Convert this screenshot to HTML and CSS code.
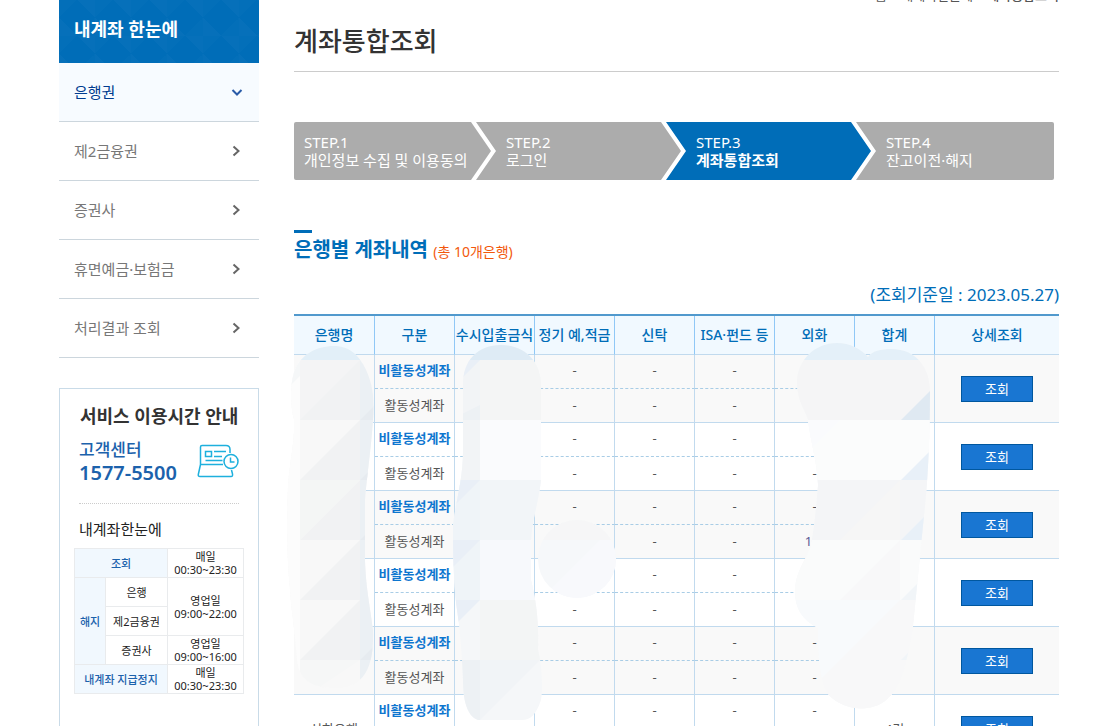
FILE: index.html
```html
<!DOCTYPE html>
<html lang="ko">
<head>
<meta charset="utf-8">
<title>계좌통합조회</title>
<link rel="stylesheet" href="styles.css">
</head>
<body>
<div class="page">
  <aside class="side">
    <h2 class="side-title">내계좌 한눈에</h2>
    <nav class="menu">
      <a class="on" href="#">은행권<svg class="chev" viewBox="0 0 12 12"><path d="M1.5 4 6 8.500 10.500 4"/></svg></a>
      <a href="#">제2금융권<svg class="chev" viewBox="0 0 12 12"><path d="M2.500 1.500 7.500 6 2.500 10.500"/></svg></a>
      <a href="#">증권사<svg class="chev" viewBox="0 0 12 12"><path d="M2.500 1.500 7.500 6 2.500 10.500"/></svg></a>
      <a href="#">휴면예금·보험금<svg class="chev" viewBox="0 0 12 12"><path d="M2.500 1.500 7.500 6 2.500 10.500"/></svg></a>
      <a href="#">처리결과 조회<svg class="chev" viewBox="0 0 12 12"><path d="M2.500 1.500 7.500 6 2.500 10.500"/></svg></a>
    </nav>
    <section class="card">
      <h3 class="card-title">서비스 이용시간 안내</h3>
      <div class="call">
        <div>
          <p class="call-name">고객센터</p>
          <p class="call-num">1577-5500</p>
        </div>
        <svg class="call-icon" viewBox="0 0 42 34">
          <path d="M26 20.500H3.500V3Q3.500 1.500 5 1.500H29Q33 1.500 33 5.500V9M3.500 20.500 1.300 30.500Q1 32.500 3 32.500H34Q36 32.500 35.500 30L34.500 26"/>
          <path d="M8.500 7.500h6v5h-6zM17 7.500h12M17 12.500h8M8.500 16.500h17"/>
          <circle cx="34" cy="17.500" r="7"/>
          <path d="M33.500 13.500v4.500h4"/>
        </svg>
      </div>
      <h4 class="card-sub">내계좌한눈에</h4>
      <table class="hours">
        <colgroup><col class="h1"><col class="h2"><col></colgroup>
        <tr><th colspan="2">조회</th><td>매일<br>00:30~23:30</td></tr>
        <tr><th rowspan="3">해지</th><td>은행</td><td rowspan="2">영업일<br>09:00~22:00</td></tr>
        <tr><td>제2금융권</td></tr>
        <tr><td>증권사</td><td>영업일<br>09:00~16:00</td></tr>
        <tr><th colspan="2">내계좌 지급정지</th><td>매일<br>00:30~23:30</td></tr>
      </table>
    </section>
  </aside>
  <main class="main">
    <div class="crumbs"><span>홈 &gt; 내계좌한눈에 &gt; <b>계좌통합조회</b></span></div>
    <h1 class="title">계좌통합조회</h1>
    <ol class="steps">
      <li class="first">STEP.1<br>개인정보 수집 및 이용동의</li>
      <li>STEP.2<br>로그인</li>
      <li class="now">STEP.3<br><b>계좌통합조회</b></li>
      <li class="last">STEP.4<br>잔고이전·해지</li>
    </ol>
    <h2 class="sub">은행별 계좌내역 <small>(총 10개은행)</small></h2>
    <p class="date">(조회기준일 : 2023.05.27)</p>
    <div class="grid">
      <table class="accounts">
        <colgroup><col class="c0"><col class="c"><col class="c"><col class="c"><col class="c"><col class="c"><col class="c"><col class="c"><col></colgroup>
        <thead><tr><th>은행명</th><th>구분</th><th>수시입출금식</th><th>정기 예,적금</th><th>신탁</th><th>ISA·펀드 등</th><th>외화</th><th>합계</th><th>상세조회</th></tr></thead>
        <tbody class="odd">
          <tr class="a"><td rowspan="2"></td><th>비활동성계좌</th><td></td><td>-</td><td>-</td><td>-</td><td></td><td rowspan="2"></td><td rowspan="2"><button>조회</button></td></tr>
          <tr class="b"><td>활동성계좌</td><td></td><td>-</td><td>-</td><td>-</td><td></td></tr>
        </tbody>
        <tbody>
          <tr class="a"><td rowspan="2"></td><th>비활동성계좌</th><td></td><td>-</td><td>-</td><td>-</td><td></td><td rowspan="2"></td><td rowspan="2"><button>조회</button></td></tr>
          <tr class="b"><td>활동성계좌</td><td></td><td>-</td><td>-</td><td>-</td><td>-</td></tr>
        </tbody>
        <tbody class="odd">
          <tr class="a"><td rowspan="2"></td><th>비활동성계좌</th><td></td><td>-</td><td>-</td><td>-</td><td>-</td><td rowspan="2"></td><td rowspan="2"><button>조회</button></td></tr>
          <tr class="b"><td>활동성계좌</td><td></td><td></td><td>-</td><td>-</td><td class="count">1건</td></tr>
        </tbody>
        <tbody>
          <tr class="a"><td rowspan="2"></td><th>비활동성계좌</th><td></td><td></td><td>-</td><td>-</td><td></td><td rowspan="2"></td><td rowspan="2"><button>조회</button></td></tr>
          <tr class="b"><td>활동성계좌</td><td></td><td>-</td><td>-</td><td>-</td><td></td></tr>
        </tbody>
        <tbody class="odd">
          <tr class="a"><td rowspan="2"></td><th>비활동성계좌</th><td></td><td>-</td><td>-</td><td>-</td><td>-</td><td rowspan="2"></td><td rowspan="2"><button>조회</button></td></tr>
          <tr class="b"><td>활동성계좌</td><td></td><td>-</td><td>-</td><td>-</td><td>-</td></tr>
        </tbody>
        <tbody>
          <tr class="a"><td rowspan="2">신한은행</td><th>비활동성계좌</th><td></td><td>-</td><td>-</td><td>-</td><td>-</td><td rowspan="2">4건</td><td rowspan="2"><button>조회</button></td></tr>
          <tr class="b"><td>활동성계좌</td><td></td><td>-</td><td>-</td><td>-</td><td>-</td></tr>
        </tbody>
      </table>
      <svg class="masks" viewBox="294 314 765 412" aria-hidden="true">
        <defs>
          <clipPath id="m1"><path d="M334 346C350 346 358 356 363 364C374 384 374 398 373 420C371 450 367 475 365 500V560C366 590 370 605 373 630C374 665 366 688 335 688C312 688 299 680 297 660C295 630 291 610 290 590C286 550 287 510 288 485C290 460 295 440 294 420C290 405 290 385 294 372C300 355 316 346 334 346Z"/></clipPath>
          <clipPath id="m2"><path d="M501 345C525 345 541 362 541 385V480C539 500 532 520 531 540V580C536 600 539 620 538 650C542 665 543 690 541 700C536 715 530 720 522 720H478C467 716 463 700 463 680C462 655 460 630 457 610C453 580 453 540 453 525C456 500 463 480 463 450V385C463 360 478 345 501 345Z"/></clipPath>
          <clipPath id="m3"><path d="M837 343C850 343 861 349 868 357C872 351 881 349 891 349C918 349 930 370 930 391C930 440 928 480 924 516L913 626C908 660 900 690 889 697C877 712 848 712 832 698C822 690 818 670 818 628C802 620 795 608 795 592C795 570 808 558 811 545C814 530 817 500 818 485C817 460 810 440 808 420C805 408 798 405 797 383C797 360 815 343 837 343Z"/></clipPath>
          <clipPath id="m4"><circle cx="577" cy="559" r="39"/></clipPath>
        </defs>
        <g clip-path="url(#m1)">
          <path fill="#f8f8f8" d="M280 340h100v350H280z"/>
          <path fill="#e2eff8" d="M280 340h100v20H280z"/>
          <path fill="#f4f4f5" d="M300 360h60v60h-60z"/>
          <path fill="#f1f2f3" d="M360 360v60h-60zM360 420v60h-60zM360 480v60h-60zM360 540v60h-60zM360 600v60h-60z"/>
          <path fill="#f4f6f5" d="M300 480h60l-60 60z"/>
          <path fill="#fcfcfc" d="M280 360h20v330h-20z"/>
          <path fill="#f5f7f8" d="M300 360v16l-20 20v-36z"/>
          <path fill="#ebf0f4" d="M360 360h20v330h-20z"/>
          <path fill="#e6ebf0" d="M380 400v20h-20zM380 460v20h-20zM380 520v20h-20zM380 640v20h-20z"/>
          <path fill="#f6f7f7" d="M300 660h60l-60 40z"/>
        </g>
        <g clip-path="url(#m2)">
          <path fill="#f5f7f9" d="M450 340h95v385h-95z"/>
          <path fill="#deebf5" d="M450 340h95v20h-95z"/>
          <path fill="#f4f5f5" d="M480 360h65v60h-65z"/>
          <path fill="#fafbfd" d="M480 420h65v60h-65z"/>
          <path fill="#f2f5f8" d="M480 480h65v60h-65z"/>
          <path fill="#f7f9fc" d="M480 540h65v60h-65z"/>
          <path fill="#f3f5f5" d="M480 600h65v60h-65z"/>
          <path fill="#f2f4f6" d="M450 360h30v60h-30zM450 420h30v60h-30z"/>
          <path fill="#eff4f8" d="M450 480h30v60h-30zM450 540h30v60h-30z"/>
          <path fill="#e9eff7" d="M450 480h30l-30 30zM450 540h30l-30 30zM450 600h30l-30 30zM480 360l-30 30v-30z"/>
          <path fill="#edf1f4" d="M450 660h30v60h-30zM480 420v-15l-30 15z"/>
          <path fill="#f1f4f7" d="M480 660h60l-60 60z"/>
        </g>
        <g clip-path="url(#m3)">
          <path fill="#f7f8f9" d="M790 340h145v375H790z"/>
          <path fill="#e4f0f9" d="M790 340h145v20H790z"/>
          <path fill="#f5f5f6" d="M790 360h145v60H790z"/>
          <path fill="#fbfcfc" d="M790 420h145v60H790z"/>
          <path fill="#fafbfd" d="M790 420h50l-50 50z"/>
          <path fill="#f4f5f7" d="M790 480h145v60H790z"/>
          <path fill="#f6f6f6" d="M900 480v60h-60z"/>
          <path fill="#fafbfb" d="M790 540h145v60H790z"/>
          <path fill="#f8f8f9" d="M900 540v60h-60zM900 600h35v115H790v-5z"/>
          <path fill="#f8fafc" d="M790 600h110L790 710z"/>
          <path fill="#dfe9f2" d="M935 386v34h-34z"/>
          <path fill="#e8f0f8" d="M935 446v34h-34zM935 506v34h-34z"/>
          <path fill="#f1f5f8" d="M935 566v34h-34zM935 626v34h-34z"/>
        </g>
        <g clip-path="url(#m4)">
          <path fill="#f6f8fa" d="M530 515h100v90H530z"/>
          <path fill="#f6f6f7" d="M530 515h100v25H530z"/>
          <path fill="#f8f9fc" d="M600 540h20v60h-80z"/>
        </g>
      </svg>
    </div>
  </main>
</div>
</body>
</html>
```
FILE: styles.css
```css
* { box-sizing: border-box; margin: 0; padding: 0; }
body {
  font-family: "Noto Sans", "Noto Sans CJK KR", sans-serif;
  color: #555;
  background: #fff;
}
.page {
  display: grid;
  grid-template-columns: 200px 1fr;
  gap: 35px;
  height: 100vh;
  padding: 0 45px 0 59px;
  overflow: hidden;
}

/* sidebar */
.side-title {
  height: 63px;
  padding: 17px 15px;
  font-size: 18px;
  line-height: 24px;
  color: #fff;
  background-color: #006db8;
  background-image:
    linear-gradient(45deg, #0670ba 25%, transparent 25%, transparent 75%, #0670ba 75%),
    linear-gradient(-45deg, #036fb9 25%, transparent 25%, transparent 75%, #036fb9 75%);
  background-size: 36px 36px;
}
.menu a {
  display: flex;
  align-items: center;
  justify-content: space-between;
  height: 59px;
  padding: 0 16px 2px 15px;
  border-bottom: 1px solid #ccd6dd;
  font-size: 15px;
  color: #777;
  text-decoration: none;
}
.menu .on { color: #003c8f; background: #f7fbff; }
.chev { width: 12px; height: 12px; margin-top: 2px; fill: none; stroke: #666; stroke-width: 2; }
.on .chev { stroke: #2a5ba8; }
.card {
  height: 400px;
  margin-top: 30px;
  padding: 15px 14px;
  border: 1px solid #c9dbe8;
}
.card-title {
  padding-left: 6px;
  font-size: 18px;
  line-height: 25px;
  color: #333;
  white-space: nowrap;
}
.call {
  display: flex;
  justify-content: space-between;
  align-items: center;
  height: 75px;
  margin: 0 5px;
  padding-bottom: 10px;
  border-bottom: 1px dotted #ccc;
  color: #1c62ac;
}
.call-name { font-size: 17px; line-height: 23px; font-weight: 500; }
.call-num { font-size: 20px; line-height: 24px; font-weight: 600; }
.call-icon { width: 42px; height: 34px; fill: none; stroke: #1eb0dd; stroke-width: 1.500; }
.card-sub {
  padding-left: 5px;
  margin: 13px 0 7px;
  font-size: 15px;
  line-height: 24px;
  font-weight: 400;
  color: #222;
}
.hours {
  width: 100%;
  border-collapse: collapse;
  table-layout: fixed;
  font-size: 11px;
  line-height: 13px;
  text-align: center;
  color: #222;
}
.h1 { width: 31px; }
.h2 { width: 62px; }
.hours th, .hours td { height: 29px; border: 1px solid #e9ebed; font-weight: 400; white-space: nowrap; }
.hours th { color: #1c62ac; background: #f1f8fe; font-weight: 500; }

/* main column */
.crumbs {
  display: flex;
  justify-content: flex-end;
  align-items: flex-end;
  height: 4px;
  overflow: hidden;
  font-size: 13px;
  line-height: 18px;
}
.crumbs b { font-weight: 500; }
.title {
  height: 68px;
  padding-top: 18px;
  border-bottom: 1px solid #ccc;
  font-size: 26px;
  line-height: 38px;
  font-weight: 500;
  color: #333;
}
.steps {
  display: flex;
  margin: 50px 5px 0 0;
  border-radius: 2px;
  overflow: hidden;
  list-style: none;
}
.steps li {
  flex: 1 1 205px;
  height: 58px;
  margin-left: -15px;
  padding: 11px 0 0 30px;
  font-size: 15px;
  line-height: 18px;
  color: #fff;
  white-space: nowrap;
  background: #acacac;
  clip-path: polygon(0 0, calc(100% - 20px) 0, 100% 50%, calc(100% - 20px) 100%, 0 100%, 20px 50%);
}
.steps .first {
  flex-basis: 197px;
  margin-left: 0;
  padding-left: 10px;
  clip-path: polygon(0 0, calc(100% - 20px) 0, 100% 50%, calc(100% - 20px) 100%, 0 100%);
}
.steps .now { background: #006db8; }
.steps .last { flex-basis: 198px; clip-path: polygon(0 0, 100% 0, 100% 100%, 0 100%, 20px 50%); }
.sub {
  margin-top: 50px;
  font-size: 20px;
  line-height: 34px;
  font-weight: 600;
  color: #006db8;
}
.sub::before { content: ""; display: block; width: 18px; height: 3px; background: #006db8; }
.sub small { font-size: 14px; font-weight: 400; color: #f2580c; }
.date {
  margin: 13px 0 7px;
  font-size: 17px;
  line-height: 25px;
  text-align: right;
  color: #006db8;
}
.grid { position: relative; }
.accounts {
  width: 100%;
  table-layout: fixed;
  border-spacing: 0;
  border-top: 2px solid #5199cd;
  font-size: 13px;
  line-height: 18px;
  text-align: center;
}
.c0 { width: 81px; }
.c { width: 80px; }
.accounts th, .accounts td { border-right: 1px solid #c1daee; white-space: nowrap; }
.accounts thead th {
  height: 39px;
  border-right-color: #90c8f6;
  border-bottom: 1px solid #c1daee;
  background: #f1f9ff;
  font-size: 14px;
  font-weight: 500;
  color: #006db8;
}
.accounts tr > :last-child:not(:nth-child(-n+7)) { border-right: 0; }
.accounts tbody th, .accounts tbody td { height: 34px; border-bottom: 1px solid #c1daee; }
.accounts tbody th { color: #0e76cf; font-weight: 600; }
.accounts .a > :not([rowspan]) { padding-bottom: 3px; border-bottom: 1px dashed #a9cde6; }
.accounts .b > td { padding-bottom: 1px; }
.accounts .odd { background: #f9f9f9; }
.accounts .count { color: #5a5a94; }
.accounts button {
  width: 72px;
  height: 26px;
  border: 1px solid #00579f;
  background: #1976d2;
  font: inherit;
  color: #fff;
}
.masks { position: absolute; left: 0; top: 0; width: 765px; height: 412px; overflow: visible; }
```
